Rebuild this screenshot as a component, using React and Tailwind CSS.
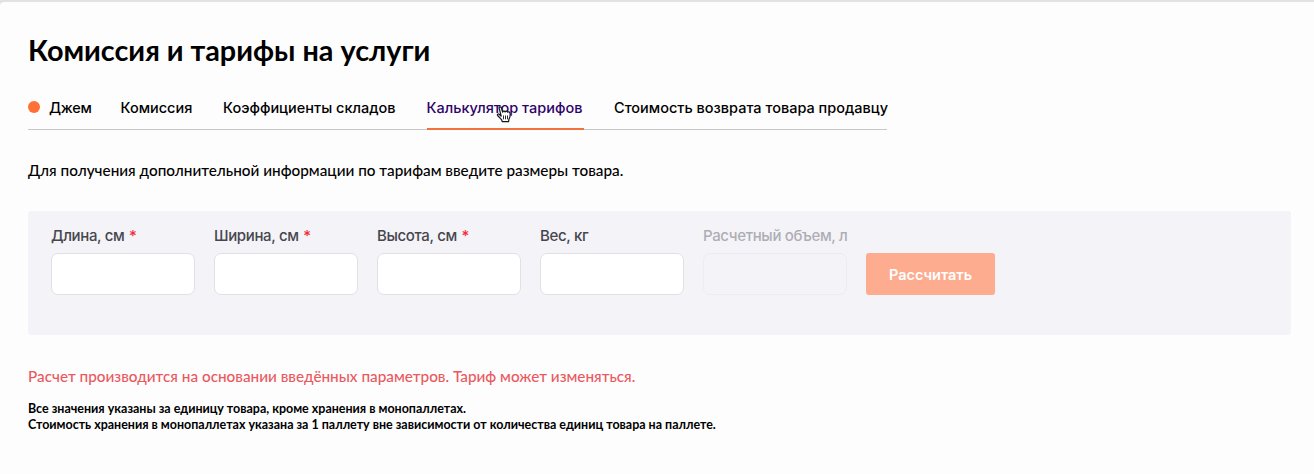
const tabs = [
  { id: 'jam', label: 'Джем', dot: true, width: 'w-[62px]' },
  { id: 'commission', label: 'Комиссия', width: 'w-[72px]' },
  { id: 'coefficients', label: 'Коэффициенты складов', width: 'w-[173px]' },
  { id: 'calculator', label: 'Калькулятор тарифов', active: true, width: 'w-[157px]' },
  { id: 'returns', label: 'Стоимость возврата товара продавцу', width: 'w-[273px]' },
];

const fields = [
  { id: 'length', label: 'Длина, см', required: true },
  { id: 'width', label: 'Ширина, см', required: true },
  { id: 'height', label: 'Высота, см', required: true },
  { id: 'weight', label: 'Вес, кг' },
  { id: 'volume', label: 'Расчетный объем, л', disabled: true },
];

function HandCursor() {
  return (
    <svg
      className="pointer-events-none absolute left-[69px] top-[20px] h-[18px] w-[17px]"
      viewBox="0 0 17 18"
      fill="none"
    >
      <path
        d="M5.2 11.2 3.2 3.4C2.8 1.7 4.8 1.2 5.3 2.8L6.7 7.2C6.8 5.9 8.7 5.7 9.1 7C9.5 5.8 11.2 5.9 11.6 7.2C12.3 6.4 13.8 6.8 14 8.2C14.4 10.5 14.1 12.6 12.9 14.4L12.6 16.6H6.2L5.8 15.1C4.8 13.5 3 12.4 1.6 10.4C1 9.3 2.1 8.5 3.2 9.3L5.2 11.2Z"
        fill="#fff"
        stroke="#171717"
        strokeWidth="1.2"
        strokeLinejoin="round"
      />
      <path d="M7.5 10.5v3.8M9.5 10.5v3.8M11.5 10.5v3.8" stroke="#171717" strokeWidth="0.9" />
    </svg>
  );
}

function Tab({ tab }) {
  return (
    <button
      className={`relative flex h-[45px] shrink-0 items-start pt-[13px] whitespace-nowrap text-[14.5px] leading-[20px] font-medium ${tab.width} ${tab.active ? 'border-b-2 border-[#f07240] text-[#2f0268]' : 'text-black'} ${tab.dot ? 'tracking-[-0.3px]' : ''}`}
    >
      {tab.dot && <span className="mt-[3px] mr-[9px] size-[12px] shrink-0 rounded-full bg-[#ff7034]" />}
      {tab.label}
      {tab.active && <HandCursor />}
    </button>
  );
}

function Field({ field }) {
  return (
    <label className={`flex w-[144px] flex-col ${field.disabled ? 'opacity-40' : ''}`}>
      <span className="mb-[7px] whitespace-nowrap text-[15px] leading-[20px] font-[450] tracking-[-0.36px] text-[#47464d]">
        {field.label}
        {field.required && <span className="ml-[1px] text-[#f52c3c]"> *</span>}
      </span>
      <input
        disabled={field.disabled}
        className={`h-[42px] w-full rounded-[7px] border border-[#e1e0e7] px-3 outline-none ${field.disabled ? 'bg-transparent' : 'bg-white'}`}
      />
    </label>
  );
}

export default function App() {
  return (
    <div className="h-[474px] overflow-hidden bg-[#e2e2e2] pt-[2px] font-['Inter',sans-serif]">
      <main className="h-full rounded-tl-[4px] bg-[#fdfdfd] pt-[30px] pr-[23px] pl-[28px]">
        <h1 className="font-['Lato',sans-serif] text-[28.8px] leading-[36px] font-bold text-black">
          Комиссия и тарифы на услуги
        </h1>

        <nav className="mt-[17px] flex h-[45px] w-[859px] justify-between shadow-[inset_0_-1px_0_#c8c8c8]">
          {tabs.map((tab) => (
            <Tab key={tab.id} tab={tab} />
          ))}
        </nav>

        <p className="mt-[30px] font-['Lato',sans-serif] text-[15.3px] leading-[20px] font-medium text-black">
          Для получения дополнительной информации по тарифам введите размеры товара.
        </p>

        <form className="mt-[31px] flex h-[124px] gap-[19px] rounded-[3px] bg-[#f4f3f8] pt-[15px] pl-[23px]">
          {fields.map((field) => (
            <Field key={field.id} field={field} />
          ))}
          <button
            type="button"
            className="mt-[27px] h-[42px] w-[129px] rounded-[3px] bg-[#fdac90] pt-[1px] text-[14.5px] font-semibold text-white"
          >
            Рассчитать
          </button>
        </form>

        <div className="font-['Lato',sans-serif]">
          <p className="mt-[31px] text-[15.3px] leading-[20px] font-medium text-[#ea5960]">
            Расчет производится на основании введённых параметров. Тариф может изменяться.
          </p>
          <p className="mt-[15px] text-[12.47px] leading-[15.5px] font-bold text-black">
            Все значения указаны за единицу товара, кроме хранения в монопаллетах.
            <br />
            Стоимость хранения в монопаллетах указана за 1 паллету вне зависимости от количества единиц товара на
            паллете.
          </p>
        </div>
      </main>
    </div>
  );
}
